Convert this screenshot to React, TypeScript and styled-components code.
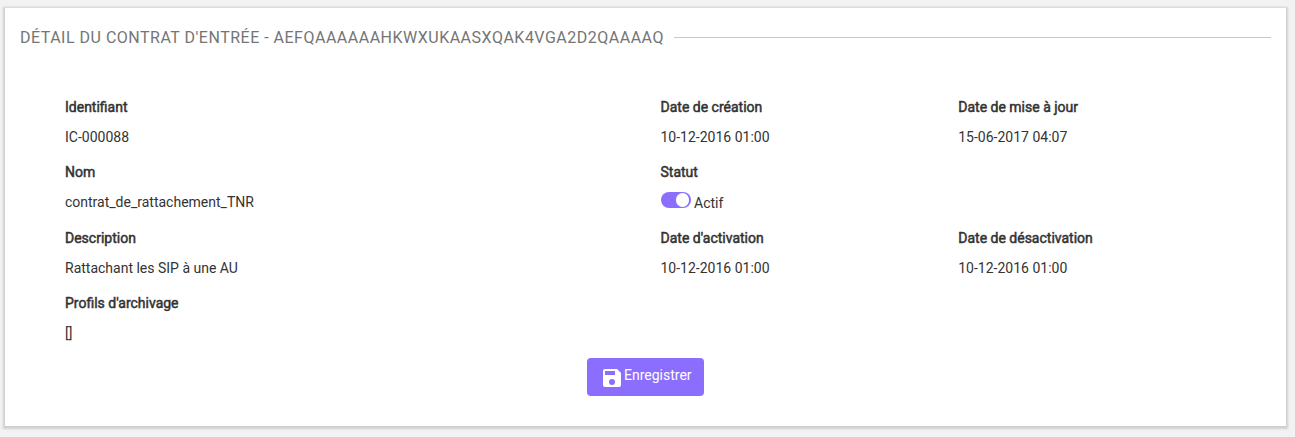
import React from 'react';
import styled, { createGlobalStyle } from 'styled-components';

const GlobalStyle = createGlobalStyle`
  *, *::before, *::after { box-sizing: border-box; }
  body {
    margin: 0;
    background: #f2f2f2;
    color: #333;
    font: 14px/20px Roboto, sans-serif;
  }
`;

const Page = styled.main`
  height: 437px;
  padding: 8px 9px 11px 5px;
  overflow: hidden;
`;

const Panel = styled.section`
  height: 418px;
  padding: 19px 15px 0;
  background: #fff;
  box-shadow: 0 1px 2px 2px rgba(0, 0, 0, 0.14);
`;

const Heading = styled.header`
  display: flex;
  align-items: center;
  gap: 10px;
  height: 20px;

  &::after {
    content: '';
    flex: 1;
    height: 1px;
    background: #c8c8c8;
  }
`;

const Title = styled.h1`
  margin: 0;
  padding-top: 2px;
  color: #757575;
  font-size: 16px;
  font-weight: 400;
  letter-spacing: 0.5px;
  text-transform: uppercase;
  white-space: nowrap;
`;

const Form = styled.div`
  padding: 50px 30px 0;
`;

const Row = styled.div`
  display: grid;
  grid-template-columns: 2fr 1fr 1fr;
`;

const Field = styled.div`
  padding: 0 15px 15px;
`;

const Label = styled.div`
  margin-bottom: 10px;
  -webkit-text-stroke: 0.5px #333;
`;

const Value = styled.div`
  height: 20px;
`;

const SwitchValue = styled.div`
  display: flex;
  gap: 3.5px;
  height: 21px;
  padding-top: 1px;
`;

const Switch = styled.span`
  display: flex;
  justify-content: flex-end;
  width: 30px;
  height: 16px;
  margin-top: -1px;
  padding: 1px 1.5px;
  border-radius: 8px;
  background: #8c6eff;

  &::after {
    content: '';
    width: 13.5px;
    height: 13.5px;
    border-radius: 50%;
    background: #fff;
  }
`;

const Actions = styled.div`
  display: flex;
  justify-content: center;
`;

const SaveButton = styled.button`
  display: flex;
  width: 117px;
  height: 38px;
  padding: 7px 0 0 13px;
  border: 0;
  border-radius: 4px;
  background: #8c6eff;
  color: #fff;
  font: 14px/20px Roboto, sans-serif;
`;

const SaveIcon = styled.svg`
  flex: none;
  width: 24px;
  height: 24px;
  margin-top: 1px;
  fill: #fff;
`;

function Entry({ label, value }: { label: string; value: string }) {
  return (
    <Field>
      <Label>{label}</Label>
      <Value>{value}</Value>
    </Field>
  );
}

export default function App() {
  return (
    <>
      <GlobalStyle />
      <Page>
        <Panel>
          <Heading>
            <Title>Détail du contrat d'entrée - aefqaaaaaahkwxukaasxqak4vga2d2qaaaaq</Title>
          </Heading>
          <Form>
            <Row>
              <Entry label="Identifiant" value="IC-000088" />
              <Entry label="Date de création" value="10-12-2016 01:00" />
              <Entry label="Date de mise à jour" value="15-06-2017 04:07" />
            </Row>
            <Row>
              <Entry label="Nom" value="contrat_de_rattachement_TNR" />
              <Field>
                <Label>Statut</Label>
                <SwitchValue>
                  <Switch role="switch" aria-checked="true" />
                  Actif
                </SwitchValue>
              </Field>
            </Row>
            <Row>
              <Entry label="Description" value="Rattachant les SIP à une AU" />
              <Entry label="Date d'activation" value="10-12-2016 01:00" />
              <Entry label="Date de désactivation" value="10-12-2016 01:00" />
            </Row>
            <Row>
              <Entry label="Profils d'archivage" value="[]" />
            </Row>
          </Form>
          <Actions>
            <SaveButton type="button">
              <SaveIcon viewBox="0 0 24 24">
                <path d="M17 3H5a2 2 0 0 0-2 2v14a2 2 0 0 0 2 2h14a2 2 0 0 0 2-2V7l-4-4zm-5 16a3 3 0 1 1 0-6 3 3 0 0 1 0 6zm3-10H5V5h10v4z" />
              </SaveIcon>
              Enregistrer
            </SaveButton>
          </Actions>
        </Panel>
      </Page>
    </>
  );
}
